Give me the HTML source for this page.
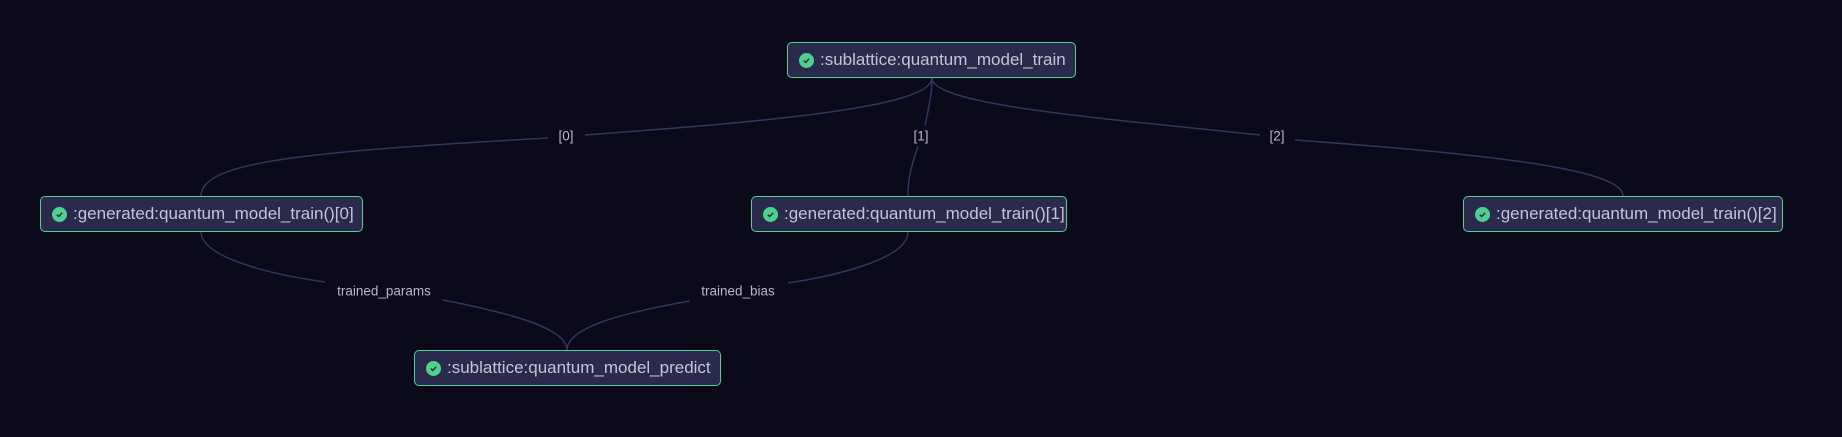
<!DOCTYPE html>
<html><head><style>
body{margin:0;width:1842px;height:437px;background:#0a0a1a;overflow:hidden;font-family:"Liberation Sans",sans-serif;position:relative}
.n{position:absolute;box-sizing:border-box;height:36px;background:#2a2a4c;border:1.5px solid #4fd08f;border-radius:5px;color:#c4c4d6;font-size:17px;display:flex;align-items:center;padding-left:11px;white-space:nowrap}
.c{width:15px;height:15px;border-radius:50%;background:#4fd08f;margin-right:6px;flex:none;display:flex;align-items:center;justify-content:center}
.l{position:absolute;color:#b8b8c8;font-size:13.5px;transform:translate(-50%,-50%);white-space:nowrap}
</style></head><body>
<svg width="1842" height="437" style="position:absolute;left:0;top:0" fill="none" stroke="#34345e" stroke-width="1.5">
<path d="M932,78 C932,108 760,122 585,135"/>
<path d="M548,138 C300,152 201,162 201,196"/>
<path d="M932,78 C932,95 928,110 925,126"/>
<path d="M918,146 C912,165 908,175 908,196"/>
<path d="M932,78 C932,105 1100,118 1260,135"/>
<path d="M1295,140 C1500,155 1623,170 1623,196"/>
<path d="M201,232 C201,255 260,273 325,282"/>
<path d="M443,300 C520,315 567,330 567,350"/>
<path d="M908,232 C908,258 840,275 788,283"/>
<path d="M690,301 C610,315 567,330 567,350"/>
</svg>
<div class="n" style="left:787px;top:42px;width:289px"><span class="c"><svg width="9" height="9" viewBox="0 0 10 10"><path d="M2 5.2L4.2 7.2 8 3" stroke="#2a2a4c" stroke-width="1.6" fill="none"/></svg></span>:sublattice:quantum_model_train</div>
<div class="n" style="left:40px;top:196px;width:323px"><span class="c"><svg width="9" height="9" viewBox="0 0 10 10"><path d="M2 5.2L4.2 7.2 8 3" stroke="#2a2a4c" stroke-width="1.6" fill="none"/></svg></span>:generated:quantum_model_train()[0]</div>
<div class="n" style="left:751px;top:196px;width:316px"><span class="c"><svg width="9" height="9" viewBox="0 0 10 10"><path d="M2 5.2L4.2 7.2 8 3" stroke="#2a2a4c" stroke-width="1.6" fill="none"/></svg></span>:generated:quantum_model_train()[1]</div>
<div class="n" style="left:1463px;top:196px;width:320px"><span class="c"><svg width="9" height="9" viewBox="0 0 10 10"><path d="M2 5.2L4.2 7.2 8 3" stroke="#2a2a4c" stroke-width="1.6" fill="none"/></svg></span>:generated:quantum_model_train()[2]</div>
<div class="n" style="left:414px;top:350px;width:307px"><span class="c"><svg width="9" height="9" viewBox="0 0 10 10"><path d="M2 5.2L4.2 7.2 8 3" stroke="#2a2a4c" stroke-width="1.6" fill="none"/></svg></span>:sublattice:quantum_model_predict</div>
<div class="l" style="left:566px;top:136px">[0]</div>
<div class="l" style="left:921px;top:136px">[1]</div>
<div class="l" style="left:1277px;top:136px">[2]</div>
<div class="l" style="left:384px;top:291px">trained_params</div>
<div class="l" style="left:738px;top:291px">trained_bias</div>
</body></html>
